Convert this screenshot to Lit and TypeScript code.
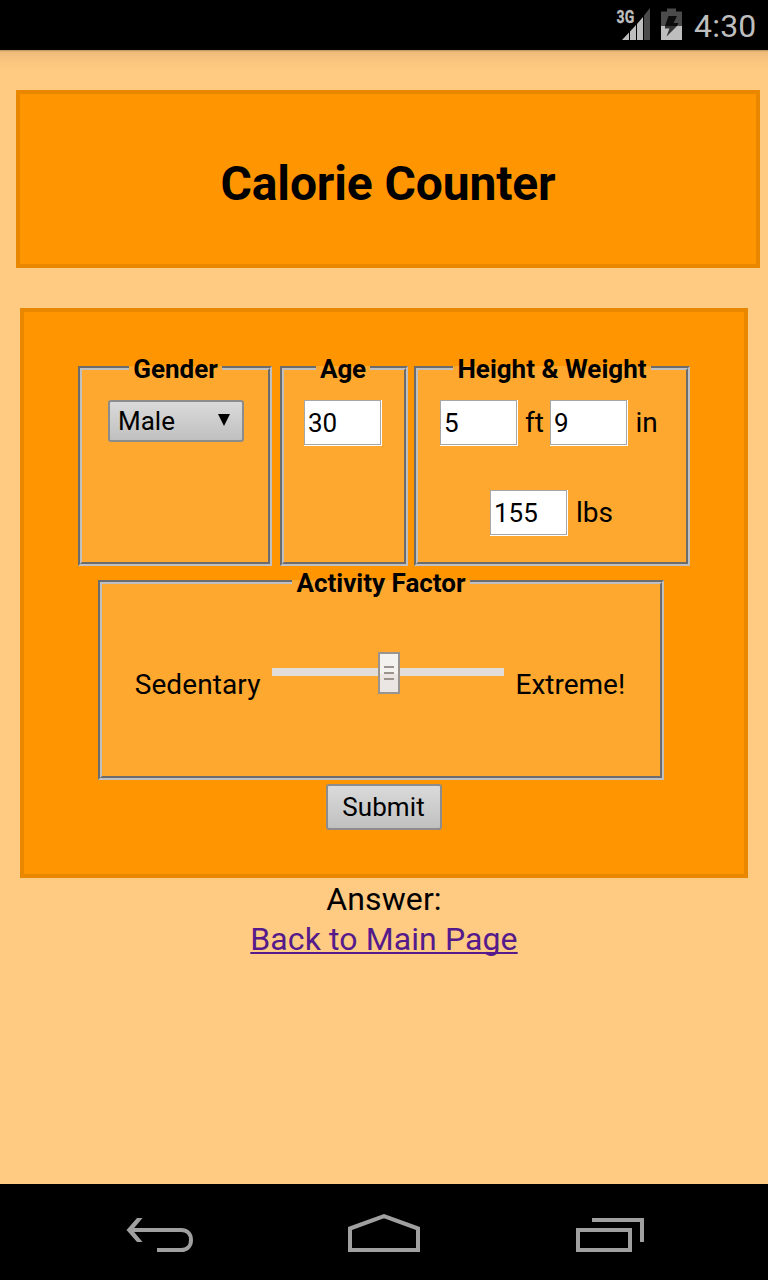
import { LitElement, html, css } from "lit";
import { customElement, state } from "lit/decorators.js";

@customElement("status-bar")
class StatusBar extends LitElement {
  static styles = css`
    :host {
      display: flex;
      justify-content: flex-end;
      height: 50px;
      flex: none;
      background: #000;
      color: #bebebe;
      font-family: Roboto, sans-serif;
    }
    .icons { display: block; }
    .network { font-size: 18.500px; font-weight: 700; fill: #bebebe; stroke: #bebebe; stroke-width: .3; }
    .clock {
      width: 74px;
      font-size: 32px;
      line-height: 52px;
      letter-spacing: .2px;
      white-space: nowrap;
    }
  `;

  render() {
    return html`
      <svg class="icons" width="80" height="50" viewBox="614 0 80 50">
        <text class="network" transform="translate(616.6 23.2) scale(.76 1)">3G</text>
        <path fill="#bebebe" d="M622 40 629 32.500V40zM630 31.500 636 25V40H630zM637 24 643 17V40H637z" />
        <path fill="#4b4b4b" d="M644 15.500 650 8V40H644z" />
        <path fill="#4b4b4b" d="M661 11.500H667V8.500H676V11.500H682V26H661z" />
        <path fill="#bebebe" d="M661 26H682V40H661z" />
        <path fill="#0c0c0c" d="M668.500 16H677L673.500 23H678.500L677 26H665z" />
        <path fill="#333" d="M665 26H677L666.500 36.500 669.500 28.500H665z" />
      </svg>
      <span class="clock">4:30</span>
    `;
  }
}

@customElement("nav-bar")
class NavBar extends LitElement {
  static styles = css`
    :host { display: block; height: 96px; flex: none; background: #000; }
    .icons { display: block; fill: none; stroke: #a0a0a0; stroke-width: 4; }
    .arrow { fill: #a0a0a0; stroke: none; }
  `;

  render() {
    return html`
      <svg class="icons" width="768" height="96" viewBox="0 1184 768 96">
        <path d="M132 1230H181C187 1230 191 1234 191 1240S187 1250 181 1250H157" />
        <path class="arrow" d="M126.500 1230 137 1218H142.500L132.500 1230 142.500 1242H137z" />
        <path d="M350 1228.500 384 1216.200 418 1228.500V1250H350z" />
        <path d="M578 1230H630V1250H578zM592 1220H642V1242" />
      </svg>
    `;
  }
}

@customElement("activity-slider")
class ActivitySlider extends LitElement {
  static styles = css`
    :host { display: grid; width: 232px; height: 42px; align-items: center; }
    .track { grid-area: 1 / 1; height: 8px; margin-bottom: 2px; background: #e2ddd8; }
    .thumb {
      grid-area: 1 / 1;
      box-sizing: border-box;
      width: 22px;
      height: 42px;
      margin-left: 106px;
      padding: 12px 4px 0;
      border: 2px solid #9b948e;
      background: linear-gradient(#f4f2ef 20px, #ebe6e3 20px);
      display: flex;
      flex-direction: column;
      gap: 4px;
    }
    .grip { height: 2px; background: #9b948e; }
  `;

  render() {
    return html`
      <div class="track"></div>
      <div class="thumb">
        <div class="grip"></div>
        <div class="grip"></div>
        <div class="grip"></div>
      </div>
    `;
  }
}

@customElement("app-root")
class AppRoot extends LitElement {
  @state() private age = "30";
  @state() private feet = "5";
  @state() private inches = "9";
  @state() private pounds = "155";

  static styles = css`
    :host {
      display: flex;
      flex-direction: column;
      height: 1280px;
      background: #ffcb82;
      color: #000;
      font-family: Roboto, sans-serif;
    }
    * { box-sizing: border-box; }
    .page {
      flex: 1;
      padding: 40px 0 0;
      background: linear-gradient(#b99260 0, #efbd7a 2px, #f6c37e 8px, #ffcb82 20px);
    }
    .banner {
      display: flex;
      justify-content: center;
      height: 178px;
      margin: 0 8px 40px 16px;
      padding-top: 60px;
      border: 4px solid #e98800;
      background: #ff9500;
    }
    .title { margin: 0; font-size: 48px; line-height: 60px; letter-spacing: -.14px; font-weight: 700; }
    .form {
      height: 570px;
      margin: 0 20px;
      padding-top: 40px;
      border: 4px solid #e98800;
      background: #ff9500;
    }
    .row { display: flex; padding-left: 54px; }
    .group {
      min-width: 0;
      height: 214px;
      margin: 0;
      padding: 16px 0 0;
      border: 4px groove #c0c0c0;
      background: #ffa82f;
    }
    .legend {
      margin: 0 auto;
      padding: 2px 4px 0;
      font-size: 26px;
      line-height: 30px;
      font-weight: 700;
      white-space: nowrap;
    }
    .gender { width: 194px; margin-right: 8px; padding-left: 1px; }
    .age { width: 128px; margin-right: 6px; padding-right: 2px; }
    .age .legend { letter-spacing: -.2px; }
    .size { width: 276px; }
    .activity { width: 566px; margin-left: 74px; padding-top: 0; }
    .picker {
      display: flex;
      justify-content: space-between;
      width: 136px;
      height: 42px;
      margin-left: 25px;
      padding: 0 12px 0 8px;
      border: 2px solid #8c8c8c;
      border-radius: 3px;
      background: linear-gradient(#dadada, #c0c0c0);
      font-size: 26px;
      line-height: 38px;
    }
    .caret { display: block; margin-top: 12px; }
    .field {
      display: block;
      flex: none;
      width: 77px;
      height: 45px;
      margin: 0 1px 1px 0;
      padding: 0 3px;
      border: 1px solid #a6a6a6;
      border-radius: 0;
      outline: none;
      background: #fff;
      box-shadow: 1px 1px #fff, 0 1px #fff, 1px 0 #fff;
      color: #000;
      font: 26px/43px Roboto, sans-serif;
    }
    .years { padding-left: 20px; }
    .measure { display: flex; height: 46px; padding-left: 22px; font-size: 28px; line-height: 46px; }
    .feet { width: 32px; padding-left: 7px; }
    .unit { padding-left: 7.500px; }
    .weight { margin-top: 44px; padding-left: 72px; }
    .weight .unit { padding-left: 8px; }
    .scale { display: flex; padding: 54px 0 0 32px; font-size: 28px; line-height: 32px; }
    .low { width: 138px; padding: 17px 0 0 .7px; letter-spacing: .1px; }
    .high { padding: 17px 0 0 11.500px; }
    .submit {
      display: block;
      width: 116px;
      height: 46px;
      margin: 4px auto 0;
      padding: 0 1px 0 0;
      border: 2px solid #8c8c8c;
      border-radius: 3px;
      background: linear-gradient(#dadada, #c0c0c0);
      color: #000;
      font: 26px/42px Roboto, sans-serif;
      letter-spacing: .1px;
    }
    .result { font-size: 32px; line-height: 40px; letter-spacing: .1px; text-align: center; }
    .answer { padding-top: 1px; }
    .link {
      color: #551a8b;
      text-decoration: underline 2px;
      text-decoration-skip-ink: none;
      text-underline-offset: 2px;
    }
  `;

  private field(value: string) {
    return html`<input class="field" .value=${value} />`;
  }

  render() {
    return html`
      <status-bar></status-bar>
      <main class="page">
        <header class="banner"><h1 class="title">Calorie Counter</h1></header>
        <section class="form">
          <div class="row">
            <fieldset class="group gender">
              <legend class="legend">Gender</legend>
              <div class="picker">
                <span>Male</span>
                <svg class="caret" width="12" height="12"><path d="M0 0H12L6 12z" /></svg>
              </div>
            </fieldset>
            <fieldset class="group age">
              <legend class="legend">Age</legend>
              <div class="years">${this.field(this.age)}</div>
            </fieldset>
            <fieldset class="group size">
              <legend class="legend">Height &amp; Weight</legend>
              <div class="measure">
                ${this.field(this.feet)}<span class="feet">ft</span>
                ${this.field(this.inches)}<span class="unit">in</span>
              </div>
              <div class="measure weight">
                ${this.field(this.pounds)}<span class="unit">lbs</span>
              </div>
            </fieldset>
          </div>
          <fieldset class="group activity">
            <legend class="legend">Activity Factor</legend>
            <div class="scale">
              <span class="low">Sedentary</span>
              <activity-slider></activity-slider>
              <span class="high">Extreme!</span>
            </div>
          </fieldset>
          <button class="submit">Submit</button>
        </section>
        <div class="result answer">Answer:</div>
        <div class="result"><a class="link" href="#">Back to Main Page</a></div>
      </main>
      <nav-bar></nav-bar>
    `;
  }
}
